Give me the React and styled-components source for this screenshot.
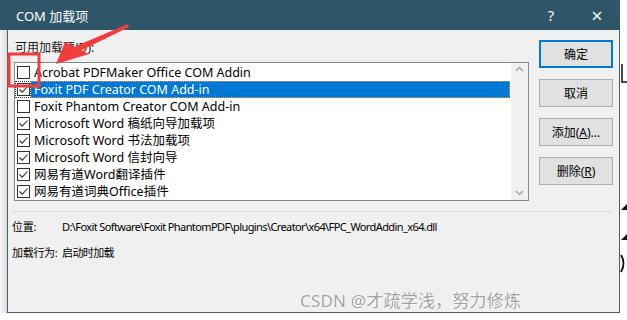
import React from 'react'
import styled, { createGlobalStyle } from 'styled-components';

const GlobalStyle = createGlobalStyle`
    html, body {
        margin: 0;
        padding: 0;
        background: #ffffff;
    }
    body {
        font-family: "Noto Sans", "Noto Sans CJK SC", sans-serif;
    }
`;

const Page = styled.div`
    width: 627px;
    height: 320px;
    position: relative;
    overflow: hidden;
    display: flex;
    background: #ffffff;
`;

const Dialog = styled.div`
    width: 620px;
    display: flex;
    flex-direction: column;
`;

const TitleBar = styled.div`
    height: 30px;
    background: #2e5668;
    color: #ffffff;
    display: flex;
    align-items: center;
    padding-left: 16px;
    font-size: 13px;
`;

const TitleText = styled.div`
    flex: 1;
`;

const TitleButton = styled.div`
    width: ${props => props.w}px;
    text-align: center;
    font-size: ${props => props.size}px;
    color: #f2f5f7;
`;

const Frame = styled.div`
    display: flex;
    height: 283px;
`;

const Shadow = styled.div`
    width: 7px;
    background: linear-gradient(to right, #f6f6f6, #dedede);
`;

const Body = styled.div`
    flex: 1;
    background: #f0f0f0;
    border: 1px solid #3c6178;
    border-top: none;
    display: flex;
    flex-direction: column;
    padding: 10px 0 0 6px;
    font-size: 12px;
    color: #000;
`;

const Top = styled.div`
    display: flex;
    gap: 10px;
`;

const LeftCol = styled.div`
    display: flex;
    flex-direction: column;
`;

const Label = styled.div`
    height: 22px;
    line-height: 15px;
    padding-left: 1px;
    color: #1a1a1a;
`;

const ListBox = styled.div`
    width: 513px;
    height: 137px;
    border: 1px solid #828790;
    background: #ffffff;
    display: flex;
`;

const Items = styled.div`
    flex: 1;
    padding-top: 1px;
`;

const Item = styled.div`
    height: 17px;
    display: flex;
    align-items: center;
`;

const BoxCell = styled.div`
    width: 16px;
    height: 17px;
    display: flex;
    align-items: center;
    justify-content: center;
    box-sizing: border-box;
    border: ${props => props.focus ? '1px dotted #333' : '1px solid transparent'};
`;

const Check = styled.div`
    width: 13px;
    height: 13px;
    box-sizing: border-box;
    border: 1px solid #333333;
    background: #ffffff;
    display: flex;
    align-items: center;
    justify-content: center;
`;

const ItemText = styled.div`
    flex: 1;
    height: 17px;
    line-height: 16px;
    padding-left: 3px;
    margin-right: 1px;
    box-sizing: border-box;
    white-space: nowrap;
    font-size: 12.5px;
    color: ${props => props.selected ? '#ffffff' : '#000000'};
    background: ${props => props.selected ? '#0078d7' : 'transparent'};
    border: ${props => props.selected ? '1px dotted #f79a3a' : '1px solid transparent'};
    border-left: none;
`;

const ScrollBar = styled.div`
    width: 17px;
    background: #f0f0f0;
    display: flex;
    flex-direction: column;
    justify-content: space-between;
    align-items: center;
    padding: 3px 0 4px;
`;

const RightCol = styled.div`
    display: flex;
    flex-direction: column;
    gap: 11px;
`;

const Button = styled.div`
    width: 74px;
    height: 28px;
    box-sizing: border-box;
    background: #e1e1e1;
    border: ${props => props.primary ? '2px solid #0078d7' : '1px solid #adadad'};
    display: flex;
    align-items: center;
    justify-content: center;
    font-size: 12px;
    color: #000;
`;

const Separator = styled.div`
    width: 600px;
    height: 1px;
    background: #dcdcdc;
    margin: 10px 0 0 -2px;
`;

const InfoRow = styled.div`
    height: 20px;
    display: flex;
    align-items: center;
    margin-left: -2px;
    margin-top: ${props => props.first ? 4 : 6}px;
    font-size: 11px;
    color: #000;
`;

const InfoLabel = styled.div`
    width: 50px;
    letter-spacing: -0.3px;
`;

const InfoValue = styled.div`
    letter-spacing: -0.6px;
    white-space: nowrap;
`;

const Backdrop = styled.div`
    flex: 1;
    background: #ffffff;
`;

const Annotation = styled.svg`
    position: absolute;
    left: 0;
    top: 0;
    pointer-events: none;
`;

const Watermark = styled.div`
    position: absolute;
    left: 300px;
    top: 287px;
    font-size: 17px;
    color: #a3a3a3;
    letter-spacing: 0.2px;
    text-shadow: 0 0 2px #ffffff, 0 0 2px #ffffff;
    white-space: nowrap;
`;

const items = [
    { text: 'Acrobat PDFMaker Office COM Addin', checked: false },
    { text: 'Foxit PDF Creator COM Add-in', checked: true, selected: true },
    { text: 'Foxit Phantom Creator COM Add-in', checked: false },
    { text: 'Microsoft Word 稿纸向导加载项', checked: true },
    { text: 'Microsoft Word 书法加载项', checked: true },
    { text: 'Microsoft Word 信封向导', checked: true },
    { text: '网易有道Word翻译插件', checked: true },
    { text: '网易有道词典Office插件', checked: true },
];

const Tick = () => (
    <svg width="11" height="11" viewBox="0 0 11 11">
        <path d="M1.5 5.5 L4.2 8.2 L9.5 2.5" fill="none" stroke="#333" strokeWidth="1.1" />
    </svg>
);

const Chevron = ({ up }) => (
    <svg width="9" height="6" viewBox="0 0 9 6">
        <path d={up ? "M1 5 L4.5 1.5 L8 5" : "M1 1 L4.5 4.5 L8 1"} fill="none" stroke="#a6a6a6" strokeWidth="1.5" />
    </svg>
);

const App = () => {
  return (
    <Page>
        <GlobalStyle />
        <Dialog>
            <TitleBar>
                <TitleText>COM 加载项</TitleText>
                <TitleButton w={46} size={15}>?</TitleButton>
                <TitleButton w={46} size={20}>×</TitleButton>
            </TitleBar>
            <Frame>
                <Shadow />
                <Body>
                    <Top>
                        <LeftCol>
                            <Label>可用加载项(<u>D</u>):</Label>
                            <ListBox>
                                <Items>
                                    {items.map((item) => (
                                        <Item key={item.text}>
                                            <BoxCell focus={item.selected}>
                                                <Check>{item.checked && <Tick />}</Check>
                                            </BoxCell>
                                            <ItemText selected={item.selected}>{item.text}</ItemText>
                                        </Item>
                                    ))}
                                </Items>
                                <ScrollBar>
                                    <Chevron up />
                                    <Chevron />
                                </ScrollBar>
                            </ListBox>
                        </LeftCol>
                        <RightCol>
                            <Button primary>确定</Button>
                            <Button>取消</Button>
                            <Button>添加(<u>A</u>)...</Button>
                            <Button>删除(<u>R</u>)</Button>
                        </RightCol>
                    </Top>
                    <Separator />
                    <InfoRow first>
                        <InfoLabel>位置:</InfoLabel>
                        <InfoValue>D:\Foxit Software\Foxit PhantomPDF\plugins\Creator\x64\FPC_WordAddin_x64.dll</InfoValue>
                    </InfoRow>
                    <InfoRow>
                        <InfoLabel>加载行为:</InfoLabel>
                        <InfoValue>启动时加载</InfoValue>
                    </InfoRow>
                </Body>
            </Frame>
        </Dialog>
        <Backdrop />
        <Annotation width="627" height="320">
            <path d="M622 64 L622 82 L627 82" fill="none" stroke="#111" strokeWidth="1.5" />
            <polygon points="621,210 627,204 627,210" fill="#111" />
            <polygon points="621,240 627,234 627,240" fill="#111" />
            <path d="M621 255 Q626 263 621 272" fill="none" stroke="#111" strokeWidth="1.8" />
            <rect x="9" y="54" width="30" height="32" fill="none" stroke="#f23b3b" strokeWidth="3" />
            <polygon points="128,24 129,27 80,51 76,46" fill="#f23b3b" />
            <polygon points="56,64 65,42 89,54" fill="#f23b3b" />
        </Annotation>
        <Watermark>CSDN @才疏学浅，努力修炼</Watermark>
    </Page>
  )
}

export default App
